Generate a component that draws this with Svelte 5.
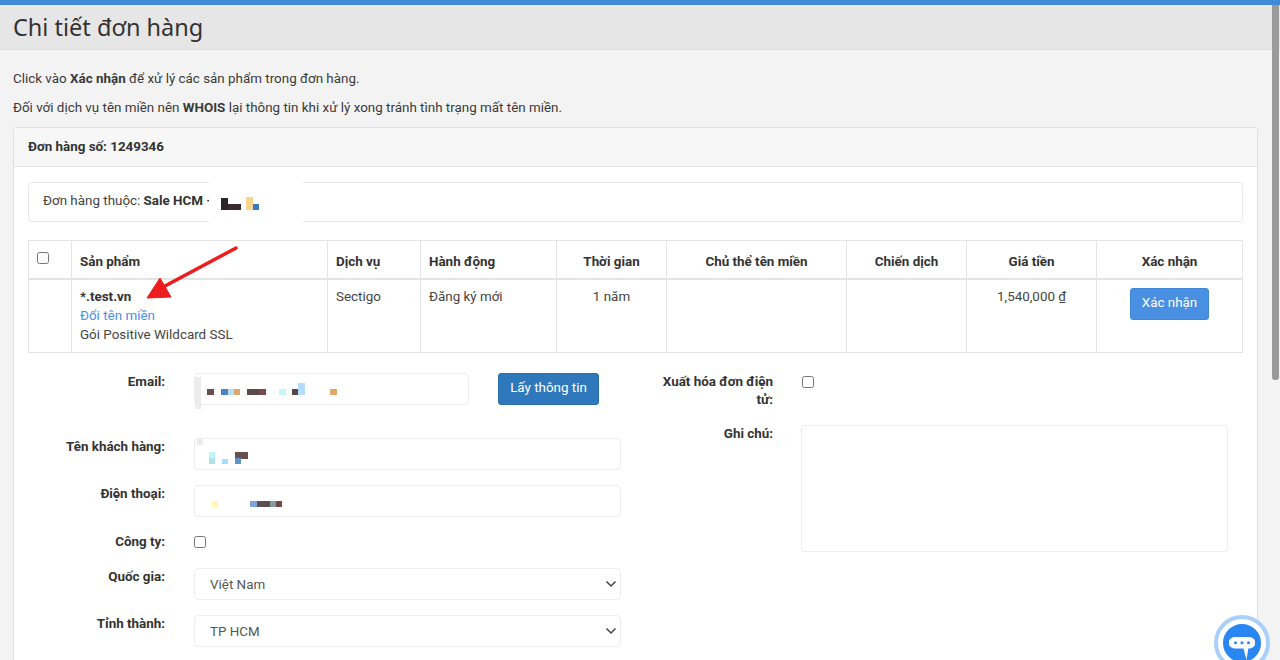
<script>
  const columns = [
    { label: "Sản phẩm", left: true },
    { label: "Dịch vụ", left: true },
    { label: "Hành động", left: true },
    { label: "Thời gian" },
    { label: "Chủ thể tên miền" },
    { label: "Chiến dịch" },
    { label: "Giá tiền" },
    { label: "Xác nhận" },
  ];

  // pixelated redaction blocks: [x, y, w, h, colour], relative to their field
  const redactEmail = [
    [0, 3, 6, 32, "#ececec"], [12, 15, 7, 6, "#6b4f50"], [26, 15, 7, 6, "#4a84c0"], [33, 15, 6, 6, "#b5e0f5"],
    [39, 15, 6, 6, "#dba873"], [52, 15, 12, 6, "#5a4a4c"], [64, 15, 7, 6, "#7d4a4c"], [84, 15, 7, 6, "#c5f5fa"],
    [97, 15, 6, 6, "#54494d"], [103, 9, 7, 12, "#b5dcfa"], [135, 15, 7, 6, "#dea868"],
  ];
  const redactName = [
    [2, 0, 6, 6, "#ececec"], [14, 13, 6, 7, "#c0f5fa"], [14, 19, 6, 6, "#aee4e4"], [27, 20, 6, 5, "#a8dcfa"],
    [40, 13, 13, 7, "#6b4f50"], [40, 19, 6, 6, "#5b95d0"],
  ];
  const redactPhone = [
    [17, 15, 6, 6, "#fdf8b0"], [55, 15, 7, 6, "#7da4d4"], [62, 15, 13, 6, "#5a5052"], [75, 15, 6, 6, "#849a9c"], [81, 15, 6, 6, "#6f4a4a"],
  ];
  const redactOwner = [
    [12, 17, 7, 12, "#2e2528"], [19, 23, 13, 6, "#3a2c2e"], [37, 16, 7, 13, "#f8d48e"], [44, 23, 6, 6, "#3a7cc0"],
  ];
</script>

{#snippet blocks(list)}
  {#each list as b}
    <i class="px" style="left:{b[0]}px;top:{b[1]}px;width:{b[2]}px;height:{b[3]}px;background:{b[4]}"></i>
  {/each}
{/snippet}

<div class="page">
  <header class="title"><h1>Chi tiết đơn hàng</h1></header>

  <main class="content">
    <p>Click vào <b>Xác nhận</b> để xử lý các sản phẩm trong đơn hàng.</p>
    <p>Đối với dịch vụ tên miền nên <b>WHOIS</b> lại thông tin khi xử lý xong tránh tình trạng mất tên miền.</p>

    <section class="card">
      <div class="card-head">Đơn hàng số: 1249346</div>
      <div class="card-body">
        <div class="owner">
          Đơn hàng thuộc: <b>Sale HCM -</b>
          <span class="owner-mask">{@render blocks(redactOwner)}</span>
        </div>

        <table>
          <thead>
            <tr>
              <th class="c0"><input type="checkbox" /></th>
              {#each columns as col, i}
                <th class="c{i + 1}" class:left={col.left}>{col.label}</th>
              {/each}
            </tr>
          </thead>
          <tbody>
            <tr>
              <td></td>
              <td class="left product">
                <b>*.test.vn</b><br />
                <a href="#top">Đổi tên miền</a><br />
                Gói Positive Wildcard SSL
              </td>
              <td class="left">Sectigo</td>
              <td class="left">Đăng ký mới</td>
              <td>1 năm</td>
              <td></td>
              <td></td>
              <td>1,540,000 ₫</td>
              <td class="action"><button class="btn confirm">Xác nhận</button></td>
            </tr>
          </tbody>
        </table>

        <div class="form">
          <div class="col">
            <div class="row email-row">
              <label for="email">Email:</label>
              <div class="field email-field" id="email">{@render blocks(redactEmail)}</div>
              <button class="btn fetch">Lấy thông tin</button>
            </div>
            <div class="row">
              <label for="name">Tên khách hàng:</label>
              <div class="field" id="name">{@render blocks(redactName)}</div>
            </div>
            <div class="row">
              <label for="phone">Điện thoại:</label>
              <div class="field" id="phone">{@render blocks(redactPhone)}</div>
            </div>
            <div class="row check-row">
              <label for="company">Công ty:</label>
              <input id="company" type="checkbox" />
            </div>
            <div class="row">
              <label for="country">Quốc gia:</label>
              <div class="field select" id="country">Việt Nam
                <svg width="12" height="8" viewBox="0 0 12 8"><path d="M1.5 1.5 6 6l4.5-4.5" fill="none" stroke="#444" stroke-width="1.5" /></svg>
              </div>
            </div>
            <div class="row">
              <label for="city">Tỉnh thành:</label>
              <div class="field select" id="city">TP HCM
                <svg width="12" height="8" viewBox="0 0 12 8"><path d="M1.5 1.5 6 6l4.5-4.5" fill="none" stroke="#444" stroke-width="1.5" /></svg>
              </div>
            </div>
          </div>

          <div class="col right">
            <div class="row invoice-row">
              <label for="invoice">Xuất hóa đơn điện tử:</label>
              <input id="invoice" type="checkbox" />
            </div>
            <div class="row">
              <label for="note">Ghi chú:</label>
              <div class="field note" id="note"></div>
            </div>
          </div>
        </div>
      </div>
    </section>
  </main>

  <svg class="arrow" width="100" height="60" viewBox="140 243 100 60">
    <path d="M236 248 165 286" stroke="#ee1c1c" stroke-width="3.5" stroke-linecap="round" />
    <path d="M147 298 160 278 171 297Z" fill="#ee1c1c" stroke="#ee1c1c" stroke-linejoin="round" />
  </svg>

  <div class="scrollbar"><span></span></div>

  <button class="chat" aria-label="Chat">
    <svg width="26" height="24" viewBox="0 0 26 24">
      <path d="M5.5 0h15a5.5 5.5 0 0 1 0 11.5h-1.2L17.5 23l-3-11.5h-9a5.5 5.5 0 0 1 0-11.5Z" fill="#fff" />
      <circle cx="6.5" cy="5.8" r="1.5" fill="#2a86f2" />
      <circle cx="13" cy="5.8" r="1.5" fill="#2a86f2" />
      <circle cx="19.5" cy="5.8" r="1.5" fill="#2a86f2" />
    </svg>
  </button>
</div>

<style>
  :global(body) {
    margin: 0;
    font-family: Roboto, "Liberation Sans", sans-serif;
    font-size: 13.4px;
    color: #333;
    background: #f3f3f3;
  }

  .page {
    position: relative;
    height: 660px;
    overflow: hidden;
    border-top: 5px solid #3f8ad9;
    box-sizing: border-box;
    background: #f3f3f3;
  }

  .title {
    height: 45px;
    box-sizing: border-box;
    padding: 6px 13px 0;
    background: #e6e6e6;
    border-bottom: 1px solid #dcdcdc;
  }

  h1 {
    margin: 0;
    font-family: "Noto Sans", "Open Sans", sans-serif;
    font-size: 23.5px;
    font-weight: 400;
    line-height: 32px;
    color: #333;
  }

  .content {
    width: 1245px;
    margin-left: 13px;
    padding-top: 19px;
  }

  p {
    margin: 0 0 9px;
    line-height: 20px;
    color: #3a3a3a;
  }

  .card {
    margin-top: 9px;
    border: 1px solid #e0e0e0;
    border-bottom: 0;
    border-radius: 4px 4px 0 0;
    background: #fff;
  }

  .card-head {
    height: 39px;
    box-sizing: border-box;
    padding: 9px 15px 9px 14px;
    line-height: 20px;
    font-weight: 700;
    background: #f7f7f7;
    border-bottom: 1px solid #e4e4e4;
  }

  .card-body {
    padding: 15px 14px 40px 14px;
  }

  .owner {
    position: relative;
    height: 40px;
    box-sizing: border-box;
    padding: 8px 15px 9px 14px;
    line-height: 20px;
    border: 1px solid #e8e8e8;
    border-radius: 4px;
    color: #444;
  }

  .owner b {
    color: #333;
  }

  .owner-mask {
    position: absolute;
    left: 180px;
    top: -2px;
    width: 94px;
    height: 44px;
    background: #fff;
  }

  table {
    width: 1215px;
    margin-top: 18px;
    border-collapse: collapse;
    table-layout: fixed;
  }

  th, td {
    border: 1px solid #e4e4e4;
    padding: 7px 8px;
    text-align: center;
    vertical-align: top;
    line-height: 19px;
    color: #444;
  }

  th {
    height: 38px;
    box-sizing: border-box;
    padding-top: 11px;
    font-weight: 700;
    border-bottom-width: 2px;
    color: #333;
  }

  td {
    height: 73px;
    box-sizing: border-box;
  }

  .left {
    text-align: left;
  }

  th.c0 { width: 43px; padding: 9px 0 0 0; text-align: left; }
  th.c0 input { margin: 2px 0 0 8px; display: block; }
  .c1 { width: 256px; }
  .c2 { width: 93px; }
  .c3 { width: 136px; }
  .c4 { width: 110px; }
  .c5 { width: 180px; }
  .c6 { width: 120px; }
  .c7 { width: 130px; }

  .product b {
    color: #333;
  }

  a {
    color: #4a90e2;
    text-decoration: none;
  }

  .btn {
    border: 1px solid transparent;
    border-radius: 3px;
    color: #fff;
    font: inherit;
    line-height: 20px;
  }

  td.action {
    padding-top: 8px;
  }

  .confirm {
    width: 79px;
    height: 32px;
    padding: 0 0 2px;
    background: #4a90e2;
    border-color: #4187d8;
  }

  .form {
    display: grid;
    grid-template-columns: 608px 607px;
    margin-top: 20px;
  }

  .row {
    display: flex;
    align-items: flex-start;
    margin-bottom: 15px;
  }

  label {
    flex: none;
    width: 137px;
    margin-right: 29px;
    text-align: right;
    font-weight: 700;
    line-height: 17px;
    color: #333;
    position: relative;
  }

  .field {
    position: relative;
    width: 427px;
    height: 32px;
    box-sizing: border-box;
    border: 1px solid #ededed;
    border-radius: 4px;
    background: #fff;
  }

  .px {
    position: absolute;
  }

  .email-row {
    margin-bottom: 33px;
  }

  .email-field {
    width: 275px;
  }

  .fetch {
    width: 101px;
    height: 32px;
    margin-left: 29px;
    padding: 0 0 2px;
    background: #2f78bb;
    border-color: #2b70ae;
  }

  .check-row {
    height: 21px;
    align-items: center;
  }

  .check-row label {
    top: -1px;
  }

  input[type="checkbox"] {
    flex: none;
    width: 12px;
    height: 12px;
    margin: 0;
    accent-color: #4a90e2;
  }

  .select {
    display: flex;
    align-items: center;
    justify-content: space-between;
    padding: 1px 3px 0 15px;
    color: #555;
  }

  .right label {
    width: 120px;
    margin-left: 17px;
    margin-right: 28px;
    line-height: 18px;
  }

  .right .row {
    padding-right: 15px;
  }

  .invoice-row {
    height: 37px;
  }

  .invoice-row input {
    margin: 3px 0 0 1px;
  }

  .note {
    height: 127px;
    border-radius: 3px;
  }

  .arrow {
    position: absolute;
    left: 140px;
    top: 238px;
  }

  .scrollbar {
    position: absolute;
    right: 0;
    top: -5px;
    width: 8px;
    height: 665px;
  }

  .scrollbar span {
    display: block;
    width: 7px;
    height: 380px;
    background: #9a9a9a;
    border-radius: 0 0 3px 3px;
  }

  .chat {
    position: absolute;
    left: 1218px;
    top: 614px;
    display: flex;
    align-items: flex-start;
    justify-content: center;
    width: 38px;
    height: 25px;
    box-sizing: content-box;
    padding: 13px 0 0;
    border: 5px solid #fff;
    outline: 4px solid #a8d0fb;
    border-radius: 50%;
    background: #2a86f2;
  }
</style>
